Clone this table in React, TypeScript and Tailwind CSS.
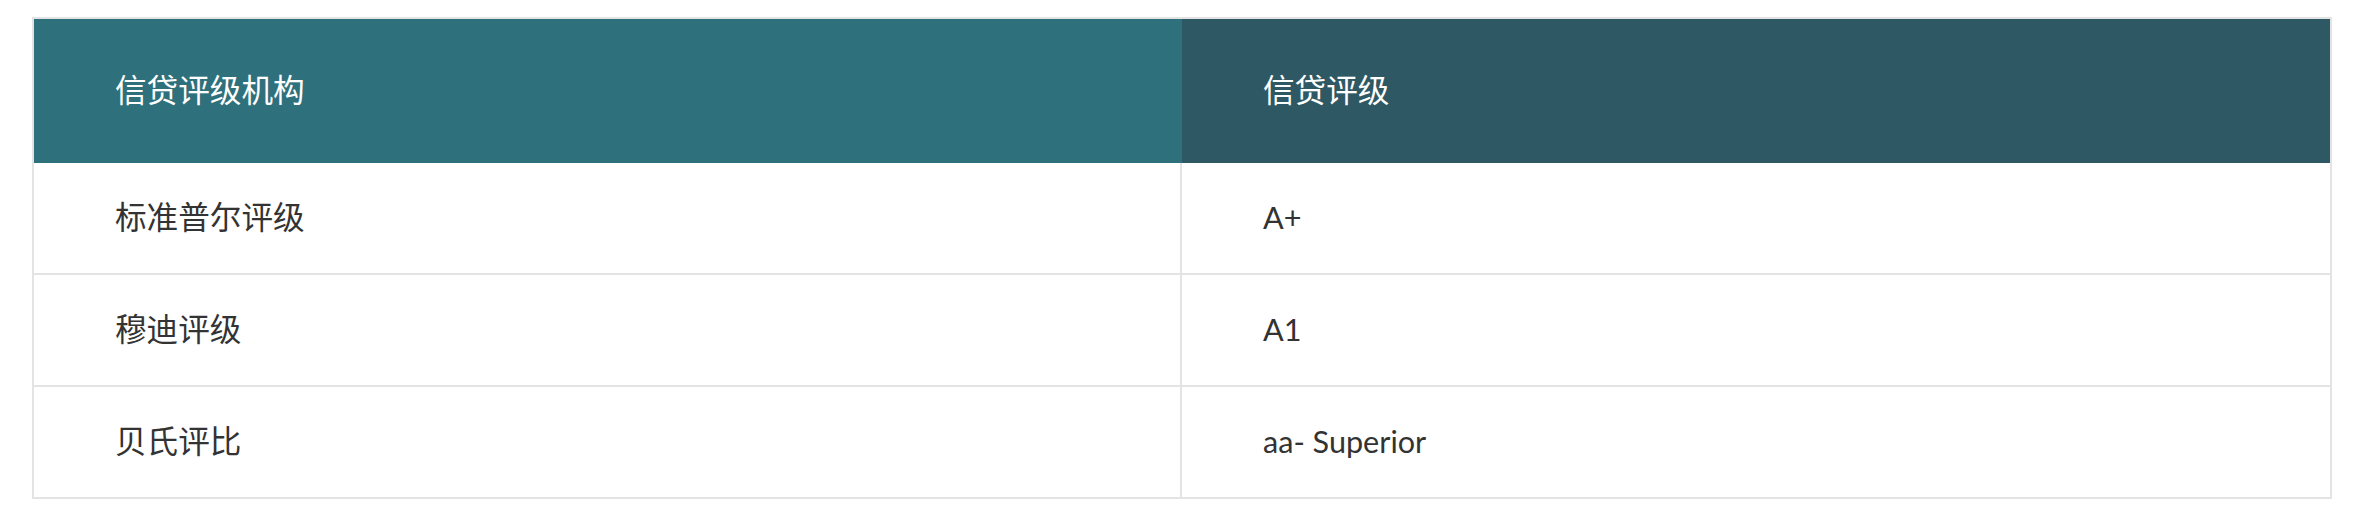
import React from "react";

const rows = [
  ["标准普尔评级", "A+"],
  ["穆迪评级", "A1"],
  ["贝氏评比", "aa- Superior"],
];

export default function App() {
  return (
    <div
      className="w-[2356px] h-[520px] bg-white pt-[17px] pl-[32px]"
      style={{ fontFamily: 'Lato, "Noto Sans CJK SC", sans-serif' }}
    >
      <div className="w-[2300px] border-2 border-[#e3e3e3] text-[31.6px] leading-none">
        <div className="grid grid-cols-2 h-[144px] text-white">
          <div className="bg-[#2e707c] flex items-center pl-[81px]">信贷评级机构</div>
          <div className="bg-[#2e5864] flex items-center pl-[81px]">信贷评级</div>
        </div>
        {rows.map((r, i) => (
          <div
            key={i}
            className={`grid grid-cols-2 text-[#333333] ${i > 0 ? "border-t-2 border-[#e3e3e3] h-[112px]" : "h-[110px]"}`}
          >
            <div className="flex items-center pl-[81px] border-r-2 border-[#e3e3e3]">{r[0]}</div>
            <div className="flex items-center pl-[81px] text-[30.6px]">{r[1]}</div>
          </div>
        ))}
      </div>
    </div>
  );
}
